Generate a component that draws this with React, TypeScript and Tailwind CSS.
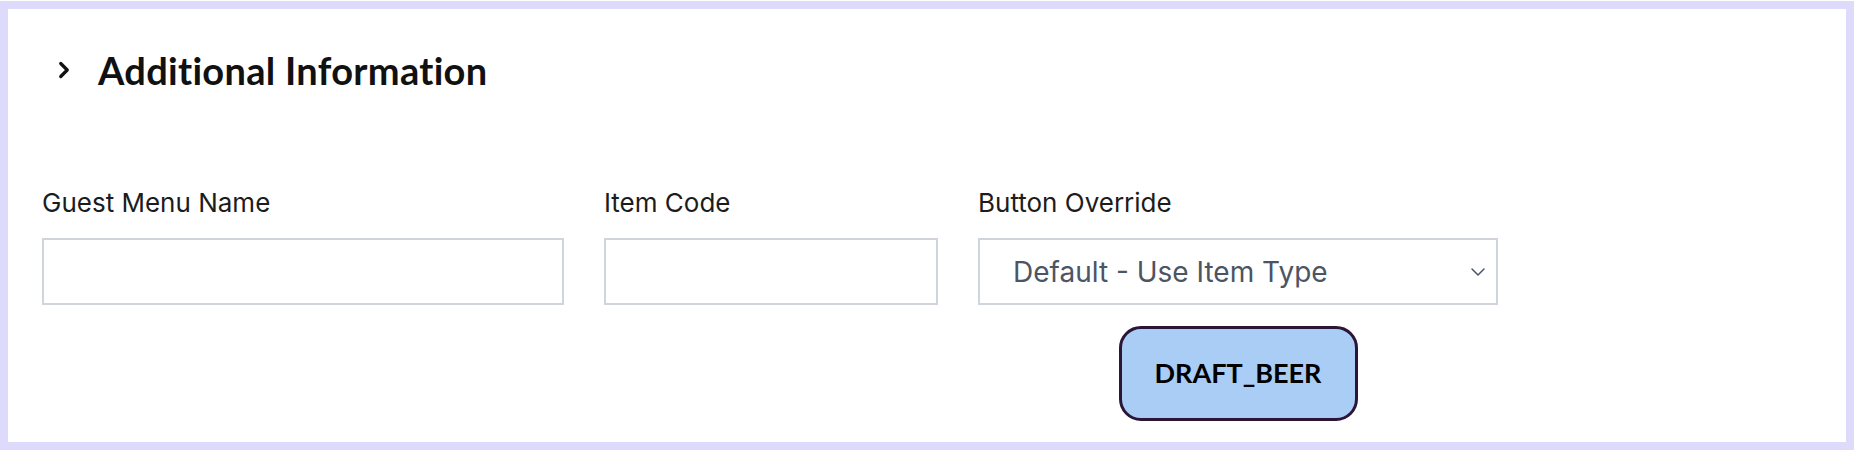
import { ChevronDown, ChevronRight } from "lucide-react";

const fields = [
  { label: "Guest Menu Name", width: "w-[522px]" },
  { label: "Item Code", width: "w-[334px]" },
];

export default function App() {
  return (
    <div className="mt-px h-[449px] border-8 border-[#dddafc] bg-white font-['Inter',sans-serif] text-[#1f1f1f]">
      <div className="mt-[41px] flex h-10 items-center pl-[43px]">
        <ChevronRight size={26} strokeWidth={3} className="text-[#111]" aria-hidden="true" />
        <h2 className="ml-[21px] font-['Lato',sans-serif] text-[38px] font-bold tracking-[0.3px] text-[#111]">
          Additional Information
        </h2>
      </div>

      <div className="mt-[98px] flex gap-10 pl-[34px]">
        {fields.map((field) => (
          <label key={field.label} className="flex flex-col">
            <span className="mb-5 h-[30px] text-[26px] leading-[30px] text-[#1c1c1c]">
              {field.label}
            </span>
            <input
              type="text"
              className={`${field.width} h-[67px] border-2 border-[#d0d5dc] bg-white outline-none`}
            />
          </label>
        ))}

        <div className="flex w-[520px] flex-col">
          <span className="mb-5 h-[30px] text-[26px] leading-[30px] text-[#1c1c1c]">
            Button Override
          </span>
          <div className="flex h-[67px] items-center justify-between border-2 border-[#d0d5dc] bg-white pl-[33px] pr-[6px]">
            <span className="text-[28px] text-[#4b5563]">Default - Use Item Type</span>
            <ChevronDown size={24} strokeWidth={1.5} className="text-[#4b5563]" aria-hidden="true" />
          </div>
          <button
            type="button"
            className="mt-[21px] h-[95px] w-[239px] self-center rounded-[22px] border-[3px] border-[#2b1638] bg-[#a9cdf4] font-['Lato',sans-serif] text-[27px] font-bold text-black"
          >
            DRAFT_BEER
          </button>
        </div>
      </div>
    </div>
  );
}
